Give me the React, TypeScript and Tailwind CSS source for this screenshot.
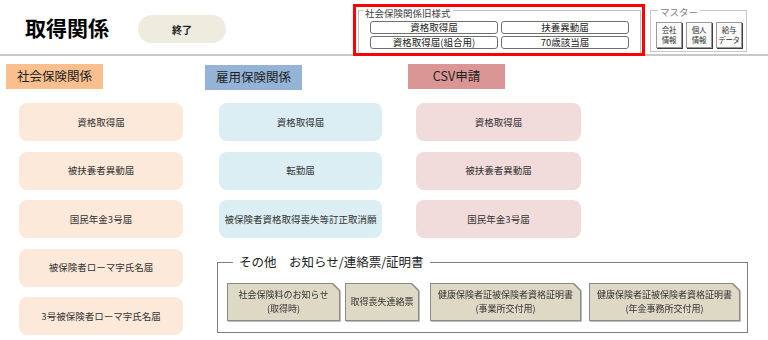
import React from 'react';

const shakai = ['資格取得届', '被扶養者異動届', '国民年金3号届', '被保険者ローマ字氏名届', '3号被保険者ローマ字氏名届'];
const koyou = ['資格取得届', '転勤届', '被保険者資格取得喪失等訂正取消願'];
const csv = ['資格取得届', '被扶養者異動届', '国民年金3号届'];

const oldForms = ['資格取得届', '扶養異動届', '資格取得届(組合用)', '70歳該当届'];

const masters = [
  ['会社', '情報'],
  ['個人', '情報'],
  ['給与', 'データ'],
];

function Card({ label, bg }: { label: string; bg: string }) {
  return (
    <div className={`h-[38px] rounded-[8px] flex items-center justify-center text-[9.5px] text-[#333] ${bg}`}>
      {label}
    </div>
  );
}

function DogEar({ lines, width, className }: { lines: string[]; width: string; className?: string }) {
  return (
    <div className={`${width} ${className ?? ''} h-[38px] drop-shadow-[1px_1px_0_rgba(0,0,0,0.25)]`}>
      <div className="h-full bg-[#8a8a8a] p-[1px] [clip-path:polygon(0_0,calc(100%-7px)_0,100%_7px,100%_100%,0_100%)]">
        <div className="h-full bg-[#ddd9c4] flex flex-col items-center justify-center text-[9px] leading-[14px] text-[#333] [clip-path:polygon(0_0,calc(100%-7px)_0,100%_7px,100%_100%,0_100%)]">
          {lines.map((l) => (
            <span key={l}>{l}</span>
          ))}
        </div>
      </div>
    </div>
  );
}

export default function App() {
  return (
    <div className="w-[768px] h-[340px] bg-white overflow-hidden font-['Noto_Sans_CJK_JP','Liberation_Sans',sans-serif]">
      {/* header */}
      <div className="h-[56px] border-b-2 border-[#c8c8c8] flex items-start pl-[25px]">
        <h1 className="mt-[14px] text-[21px] leading-[26px] font-bold text-black">取得関係</h1>
        <button className="ml-[29px] mt-[15px] w-[88px] h-[28px] rounded-full bg-[#eeebdf] text-[10px] font-bold text-[#222]">
          終了
        </button>

        <div className="ml-[127px] mt-[4px] w-[292px] h-[52px] border-[3px] border-[#ff0000] bg-white pl-[2px] pr-[1px] pt-[3px] relative z-10">
          <div className="relative h-full border border-[#c0c0c0] border-b-0 pl-[11px] pr-[11px] pt-[10px]">
            <span className="absolute left-[4px] top-[-3px] px-[2px] bg-white text-[9.5px] leading-[11px] text-[#404040]">
              社会保険関係旧様式
            </span>
            <div className="grid grid-cols-2 gap-x-[3px] gap-y-[2px]">
              {oldForms.map((f) => (
                <button
                  key={f}
                  className="h-[13px] bg-white border border-[#707070] rounded-[3px] text-[9.5px] leading-none text-[#222] flex items-center justify-center"
                >
                  {f}
                </button>
              ))}
            </div>
          </div>
        </div>

        <div className="ml-[5px] mt-[10px] w-[97px] h-[42px] border border-[#c8c8c8] relative pl-[5px] pt-[11px] flex gap-[4px]">
          <span className="absolute left-[7px] top-[-4px] px-[2px] bg-white text-[9.5px] leading-[11px] text-[#808080]">
            マスター
          </span>
          {masters.map((m) => (
            <button
              key={m[0]}
              className="w-[26px] h-[26px] bg-[#fafafa] border border-[#9a9a9a] shadow-[1px_1px_0_#404040] flex flex-col items-center justify-center whitespace-nowrap text-[7.5px] leading-[10px] tracking-[-0.3px] text-[#333]"
            >
              <span>{m[0]}</span>
              <span>{m[1]}</span>
            </button>
          ))}
        </div>
      </div>

      {/* body */}
      <div className="flex pl-[6px] pt-[8px]">
        <div className="w-[199px]">
          <div className="w-[97px] h-[25px] bg-[#fabf8f] flex items-center justify-center text-[12.5px] text-[#222]">
            社会保険関係
          </div>
          <div className="ml-[13px] w-[164px] mt-[14px] flex flex-col gap-[10.5px]">
            {shakai.map((s) => (
              <Card key={s} label={s} bg="bg-[#fde9d9]" />
            ))}
          </div>
        </div>

        <div className="flex flex-col">
          <div className="flex">
            <div className="w-[203px]">
              <div className="w-[97px] h-[25px] mt-[1px] bg-[#95b3d7] flex items-center justify-center text-[12.5px] text-[#222]">
                雇用保険関係
              </div>
              <div className="ml-[14px] w-[163px] mt-[13px] flex flex-col gap-[10.5px]">
                {koyou.map((s) => (
                  <Card key={s} label={s} bg="bg-[#daeef3]" />
                ))}
              </div>
            </div>
            <div className="w-[200px]">
              <div className="w-[97px] h-[25px] bg-[#da9694] flex items-center justify-center text-[12.5px] text-[#222]">
                CSV申請
              </div>
              <div className="ml-[8px] w-[165px] mt-[14px] flex flex-col gap-[10.5px]">
                {csv.map((s) => (
                  <Card key={s} label={s} bg="bg-[#f2dcdb]" />
                ))}
              </div>
            </div>
          </div>

          <div className="ml-[12px] mt-[24px] w-[531px] h-[71px] border border-[#7f7f7f] relative pl-[9px] pt-[20px] flex">
            <span className="absolute left-[15px] top-[-10px] px-[6px] bg-white text-[12.5px] leading-[18px] text-[#222]">
              その他　お知らせ/連絡票/証明書
            </span>
            <DogEar lines={['社会保険料のお知らせ', '(取得時)']} width="w-[113px]" />
            <DogEar lines={['取得喪失連絡票']} width="w-[74px]" className="ml-[5px]" />
            <DogEar lines={['健康保険者証被保険者資格証明書', '(事業所交付用)']} width="w-[151px]" className="ml-[11px]" />
            <DogEar lines={['健康保険者証被保険者資格証明書', '(年金事務所交付用)']} width="w-[151px]" className="ml-[8px]" />
          </div>
        </div>
      </div>
    </div>
  );
}
